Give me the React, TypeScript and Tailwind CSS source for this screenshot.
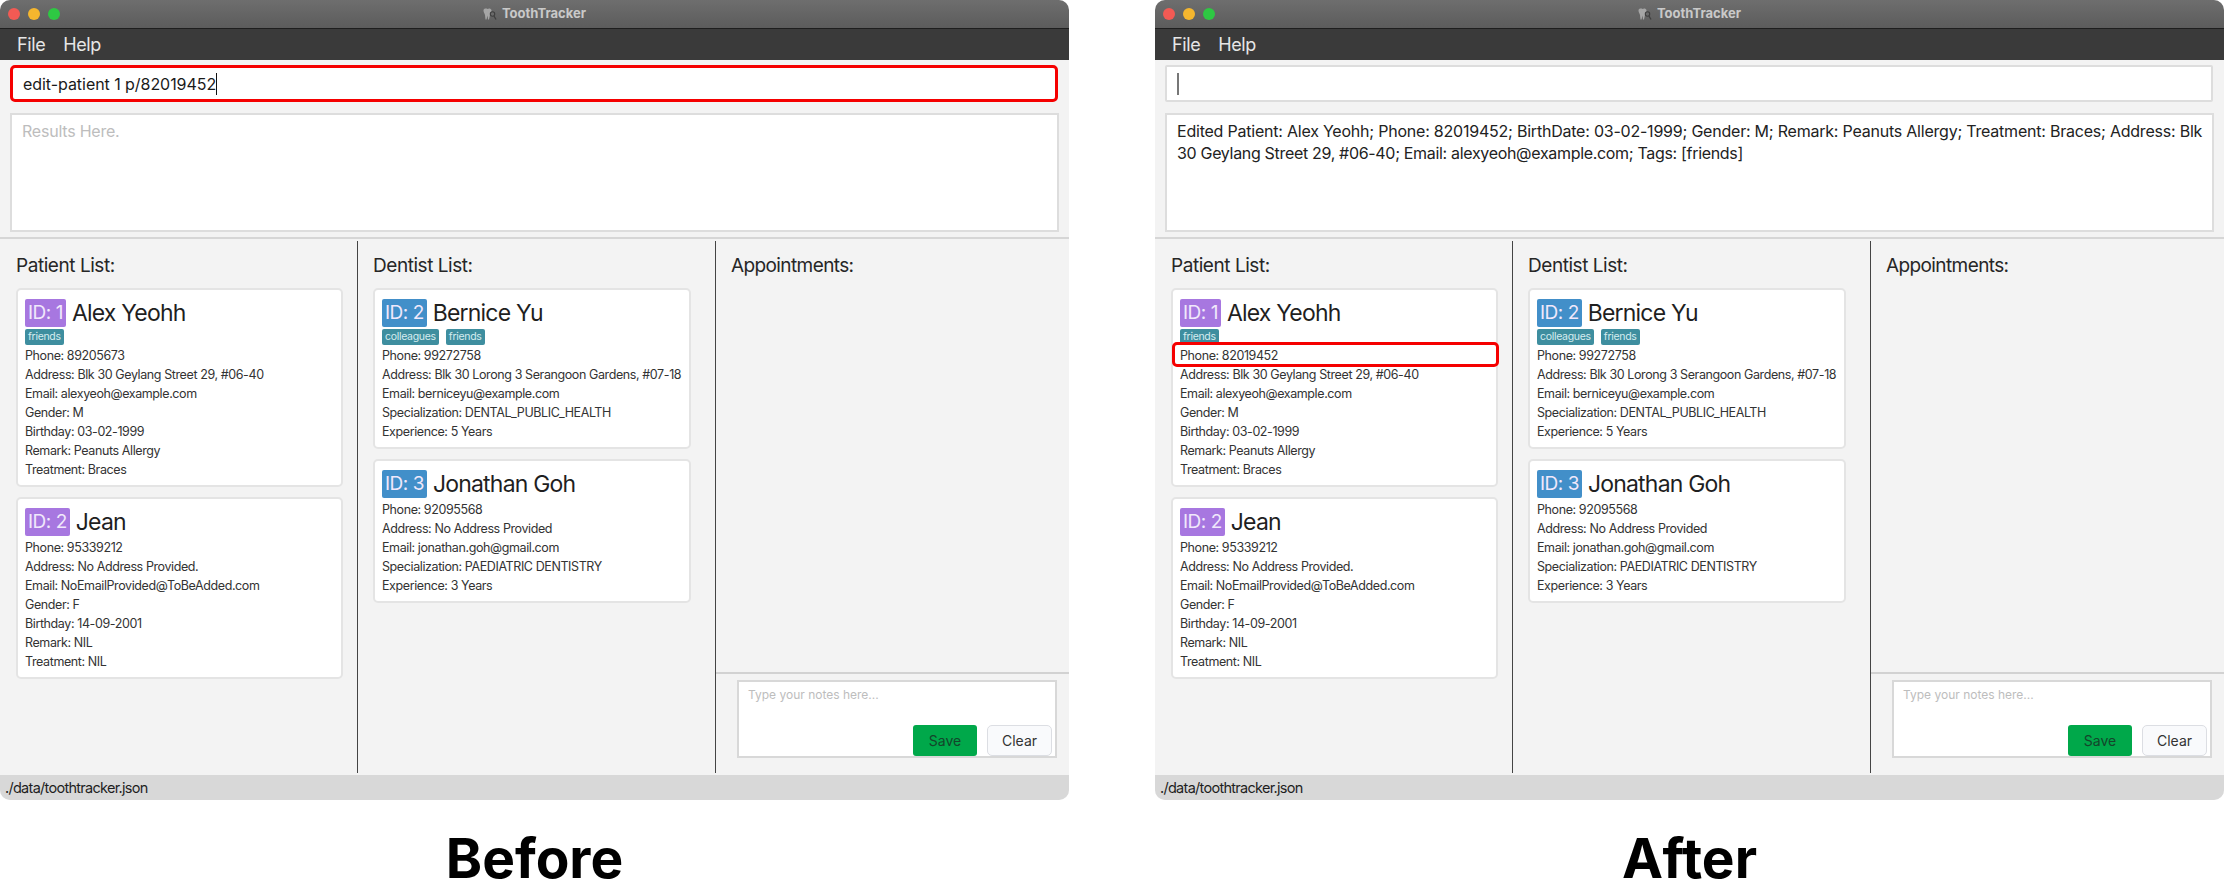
type Person = {
  id: number;
  name: string;
  tags?: string[];
  rows: string[];
};

const font = "font-['Inter','Liberation_Sans',sans-serif]";

const dentists: Person[] = [
  {
    id: 2,
    name: "Bernice Yu",
    tags: ["colleagues", "friends"],
    rows: [
      "Phone: 99272758",
      "Address: Blk 30 Lorong 3 Serangoon Gardens, #07-18",
      "Email: berniceyu@example.com",
      "Specialization: DENTAL_PUBLIC_HEALTH",
      "Experience: 5 Years",
    ],
  },
  {
    id: 3,
    name: "Jonathan Goh",
    rows: [
      "Phone: 92095568",
      "Address: No Address Provided",
      "Email: jonathan.goh@gmail.com",
      "Specialization: PAEDIATRIC DENTISTRY",
      "Experience: 3 Years",
    ],
  },
];

function patients(phone: string): Person[] {
  return [
    {
      id: 1,
      name: "Alex Yeohh",
      tags: ["friends"],
      rows: [
        "Phone: " + phone,
        "Address: Blk 30 Geylang Street 29, #06-40",
        "Email: alexyeoh@example.com",
        "Gender: M",
        "Birthday: 03-02-1999",
        "Remark: Peanuts Allergy",
        "Treatment: Braces",
      ],
    },
    {
      id: 2,
      name: "Jean",
      rows: [
        "Phone: 95339212",
        "Address: No Address Provided.",
        "Email: NoEmailProvided@ToBeAdded.com",
        "Gender: F",
        "Birthday: 14-09-2001",
        "Remark: NIL",
        "Treatment: NIL",
      ],
    },
  ];
}

function ToothIcon() {
  return (
    <svg width="14" height="12" viewBox="0 0 14 12" className="mr-[5px]">
      <path
        d="M0.500 2.500C0.500 0.500 3 0 4.500 1C6 0 8 0.500 8.500 2C8.800 4 7.500 5 7 7L6 11.500H5L4.500 7.500L3.500 11.500H2.500L2 7C1.500 5 0.500 4.500 0.500 2.500Z"
        fill="#a6a6a6"
      />
      <circle cx="9.500" cy="6" r="2.200" fill="#6a6a6a" stroke="#3f3f3f" strokeWidth="1.100" />
      <path d="M11 8L13 11.500" stroke="#3f3f3f" strokeWidth="1.300" />
    </svg>
  );
}

function Card({ person, badge }: { person: Person; badge: string }) {
  return (
    <div className="bg-white border-2 border-[#e4e4e4] rounded-[5px] pl-[7px] pt-[9px] pb-[6px] pr-1">
      <div className="flex items-center h-[28px]">
        <span
          className={
            "h-[28px] flex items-center px-[3px] rounded-[2px] text-[19px] tracking-[-0.5px] text-[#f0e8fb] " + badge
          }
        >
          ID: {person.id}
        </span>
        <span className="ml-[6px] text-[23px] text-[#1f1f1f] tracking-[-0.8px]">{person.name}</span>
      </div>
      {person.tags ? (
        <div className="flex gap-[7px] mt-[2px] h-[16px]">
          {person.tags.map((t) => (
            <span
              key={t}
              className="h-[16px] flex items-center px-[3px] rounded-[2px] bg-[#3e8e9f] text-[10.5px] tracking-[-0.3px] text-[#d5ecef]"
            >
              {t}
            </span>
          ))}
        </div>
      ) : (
        <div className="h-[1px]" />
      )}
      <div className="pt-[1px]">
        {person.rows.map((r) => (
          <div
            key={r}
            className="h-[19px] leading-[19px] text-[12.5px] text-[#333333] whitespace-nowrap tracking-[-0.4px]"
          >
            {r}
          </div>
        ))}
      </div>
    </div>
  );
}

function Window({ after }: { after?: boolean }) {
  const list = patients(after ? "82019452" : "89205673");
  return (
    <div className="w-[1069px] h-[800px] rounded-[10px] overflow-hidden flex flex-col bg-[#f3f3f3]">
      <div className="relative h-[29px] shrink-0 border-b border-[#1e1e1e] bg-gradient-to-b from-[#6e6e6e] to-[#5c5c5c] flex items-center justify-center">
        <div className="absolute left-[8px] top-[8px] flex gap-[8px]">
          <span className="w-[12px] h-[12px] rounded-full bg-[#f25a54]" />
          <span className="w-[12px] h-[12px] rounded-full bg-[#f5b62e]" />
          <span className="w-[12px] h-[12px] rounded-full bg-[#2ec843]" />
        </div>
        <ToothIcon />
        <span className="text-[13px] font-bold text-[#c9c9c9]">ToothTracker</span>
      </div>
      <div className="h-[31px] shrink-0 bg-[#3a3a3a] flex items-center pl-[17px] gap-[18px] text-[18px] tracking-[-0.4px] text-[#e6e6e6]">
        <span>File</span>
        <span>Help</span>
      </div>

      <div
        className={
          "mt-[5px] ml-[10px] mr-[11px] h-[37px] shrink-0 bg-white flex items-center " +
          (after ? "border-2 border-[#dddddd] rounded-[2px]" : "border-[3px] border-[#f50000] rounded-[5px]")
        }
      >
        {after ? (
          <span className="ml-[10px] w-[2px] h-[22px] bg-[#777777]" />
        ) : (
          <>
            <span className="ml-[10px] text-[16px] text-[#1a1a1a] tracking-[-0.05px] whitespace-nowrap">
              edit-patient 1 p/82019452
            </span>
            <span className="w-[1px] h-[22px] bg-[#111111]" />
          </>
        )}
      </div>

      <div className="mt-[11px] mx-[10px] h-[119px] shrink-0 bg-white border-2 border-[#dddddd] pl-[10px] pt-[5px] text-[16px] leading-[22px] tracking-[-0.22px] whitespace-nowrap">
        {after ? (
          <span className="text-[#222222]">
            Edited Patient: Alex Yeohh; Phone: 82019452; BirthDate: 03-02-1999; Gender: M; Remark: Peanuts Allergy;
            Treatment: Braces; Address: Blk
            <br />
            <span className="tracking-[-0.32px]">
              30 Geylang Street 29, #06-40; Email: alexyeoh@example.com; Tags: [friends]
            </span>
          </span>
        ) : (
          <span className="text-[#bdbdbd]">Results Here.</span>
        )}
      </div>

      <div className="mt-[5px] h-[2px] shrink-0 bg-[#d6d6d6]" />

      <div className="relative flex-1 min-h-0 flex pt-[2px] pb-[2px]">
        <div className="w-[358px] shrink-0 border-r border-[#444444] pl-[16px] pr-[14px]">
          <div className="h-[46px] pt-[5px] flex items-center text-[19px] text-[#262626] tracking-[-0.45px]">
            Patient List:
          </div>
          <div className="mt-[1px] flex flex-col gap-[10px]">
            {list.map((p) => (
              <Card key={p.id} person={p} badge="bg-[#a777e0]" />
            ))}
          </div>
        </div>
        <div className="w-[358px] shrink-0 border-r border-[#444444] pl-[15px] pr-[24px]">
          <div className="h-[46px] pt-[5px] flex items-center text-[19px] text-[#262626] tracking-[-0.45px]">
            Dentist List:
          </div>
          <div className="mt-[1px] flex flex-col gap-[10px]">
            {dentists.map((p) => (
              <Card key={p.id} person={p} badge="bg-[#428fc9]" />
            ))}
          </div>
        </div>
        <div className="flex-1 flex flex-col">
          <div className="flex-1 pl-[15px]">
            <div className="h-[46px] pt-[5px] flex items-center text-[19px] text-[#262626] tracking-[-0.6px]">
              Appointments:
            </div>
          </div>
          <div className="h-[2px] bg-[#d2d2d2]" />
          <div className="relative mt-[6px] mb-[15px] ml-[21px] mr-[12px] h-[78px] bg-white border-2 border-[#d8d8d8] pl-[9px] pt-[4px] text-[12px] text-[#bdbdbd]">
            Type your notes here...
            <div className="absolute right-[3px] bottom-0 flex gap-[10px] text-[14px]">
              <span className="w-[64px] h-[31px] flex items-center justify-center rounded-[3px] bg-[#00a84a] text-[#14452b]">
                Save
              </span>
              <span className="w-[65px] h-[31px] flex items-center justify-center rounded-[5px] bg-[#f9fafc] border border-[#dcdee3] text-[#333333]">
                Clear
              </span>
            </div>
          </div>
        </div>
        {after ? (
          <div className="absolute left-[17px] top-[103px] w-[327px] h-[25px] border-[3px] border-[#f50000] rounded-[5px]" />
        ) : null}
      </div>

      <div className="h-[25px] shrink-0 bg-[#d8d8d8] flex items-center pl-[5px] text-[14.5px] tracking-[-0.72px] text-[#1f1f1f]">
        ./data/toothtracker.json
      </div>
    </div>
  );
}

export default function App() {
  return (
    <div className={"w-[2224px] h-[891px] bg-white flex gap-[86px] overflow-hidden " + font}>
      <div className="flex flex-col items-center">
        <Window />
        <div className="mt-[26px] text-[55px] leading-[64px] font-bold text-black">Before</div>
      </div>
      <div className="flex flex-col items-center">
        <Window after />
        <div className="mt-[26px] text-[55px] leading-[64px] font-bold text-black">After</div>
      </div>
    </div>
  );
}
